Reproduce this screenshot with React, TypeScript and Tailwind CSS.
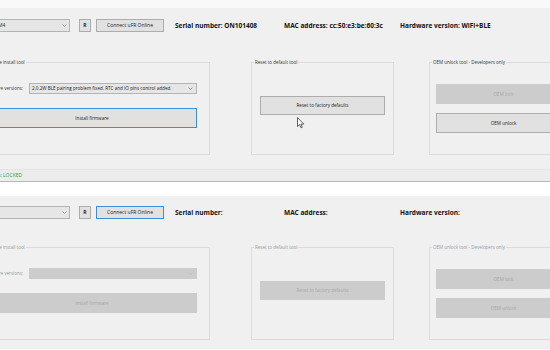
import React from "react";

interface PanelProps {
  online: boolean;
}

const Chevron = ({ color }: { color: string }) => (
  <svg width="5" height="3" viewBox="0 0 5 3" className="shrink-0">
    <path d="M0.5 0.5 L2.5 2.5 L4.5 0.5" fill="none" stroke={color} strokeWidth="0.7" />
  </svg>
);

const Cursor = () => (
  <svg width="8" height="12" viewBox="0 0 8 12" className="absolute left-[297px] top-[109px]">
    <path d="M0.5 0.5 L0.5 9.5 L2.6 7.6 L4 10.8 L5.3 10.2 L3.9 7.1 L6.8 7.1 Z" fill="#ffffff" stroke="#222" strokeWidth="0.7" />
  </svg>
);

const Panel = ({ online }: PanelProps) => {
  const label = online ? "text-[#333]" : "text-[#9a9a9a]";
  const btn = online
    ? "bg-[#e1e1e1] border border-[#adadad] text-[#222]"
    : "bg-[#cccccc] border border-[#cccccc] text-[#a8a8a8]";
  return (
    <div className={`relative bg-[#f0f0f0] ${online ? "pt-[11px]" : "pt-[10px]"}`}>
      {/* header row */}
      <div className="flex items-center h-[13px]">
        <div className="-ml-[20px] w-[90px] h-[13px] bg-[#e6e6e6] border border-[#b4b4b4] flex items-center justify-between pl-[10px] pr-[2px]">
          <span className="text-[5px] text-[#333]">{online ? "COM4" : ""}</span>
          <Chevron color="#888" />
        </div>
        <div className="ml-[9px] w-[12px] h-[13px] bg-[#e1e1e1] border border-[#adadad] flex items-center justify-center text-[5px] font-bold text-[#222]">
          R
        </div>
        <div
          className={`ml-[5px] w-[68px] h-[13px] bg-[#e1e1e1] border flex items-center justify-center text-[5px] text-[#222] ${
            online ? "border-[#adadad]" : "border-[#3d8ed8]"
          }`}
        >
          Connect uFR Online
        </div>
        <div className="ml-[11px] w-[109px] text-[6.5px] font-bold text-[#111] whitespace-nowrap">
          Serial number:{online ? " ON101408" : ""}
        </div>
        <div className="w-[116px] text-[6.5px] font-bold text-[#111] whitespace-nowrap">
          MAC address:{online ? " cc:50:e3:be:60:3c" : ""}
        </div>
        <div className="text-[6.5px] font-bold text-[#111] whitespace-nowrap">
          Hardware version:{online ? " WiFi+BLE" : ""}
        </div>
      </div>

      {/* group boxes */}
      <div className={`flex items-start ${online ? "mt-[27px] pb-[14px]" : "mt-[25px] pb-[9px]"}`}>
        <fieldset className="-ml-[22px] w-[232px] h-[96px] border border-[#dcdcdc] shrink-0">
          <legend className={`ml-[2px] px-[1px] text-[4.5px] leading-[6px] ${label}`}>Firmware install tool</legend>
          <div className="flex items-center pt-[18px]">
            <div className={`w-[44px] text-right text-[4.5px] whitespace-nowrap ${label}`}>Firmware versions:</div>
            <div
              className={`ml-[6px] w-[168px] h-[11px] flex items-center justify-between pl-[2px] pr-[3px] border ${
                online ? "bg-[#e6e6e6] border-[#b4b4b4]" : "bg-[#cccccc] border-[#cccccc]"
              }`}
            >
              <span className="text-[4.6px] text-[#222] whitespace-nowrap">
                {online ? "2.0.2W BLE pairing problem fixed. RTC and IO pins control added." : ""}
              </span>
              <Chevron color={online ? "#777" : "#bbb"} />
            </div>
          </div>
          <div
            className={`ml-[8px] mt-[14px] w-[210px] h-[20px] flex items-center justify-center text-[4.6px] ${
              online ? "bg-[#e1e1e1] border border-[#3d8ed8] text-[#222]" : btn
            }`}
          >
            Install firmware
          </div>
        </fieldset>

        <fieldset className="ml-[41px] w-[143px] h-[96px] border border-[#dcdcdc] shrink-0">
          <legend className={`ml-[2px] px-[1px] text-[4.5px] leading-[6px] ${label}`}>Reset to default tool</legend>
          <div className={`ml-[8px] mt-[31px] w-[125px] h-[19px] flex items-center justify-center text-[4.6px] ${btn}`}>
            Reset to factory defaults
          </div>
        </fieldset>

        <fieldset className="ml-[35px] w-[150px] h-[96px] border border-[#dcdcdc] shrink-0">
          <legend className={`ml-[2px] px-[1px] text-[4.5px] leading-[6px] ${label}`}>OEM unlock tool - Developers only</legend>
          <div className="flex flex-col gap-[9px] ml-[6px] mt-[19px]">
            <div className="w-[135px] h-[20px] flex items-center justify-center text-[4.6px] bg-[#cccccc] border border-[#cccccc] text-[#a8a8a8]">
              OEM lock
            </div>
            <div className={`w-[135px] h-[20px] flex items-center justify-center text-[4.6px] ${btn}`}>OEM unlock</div>
          </div>
        </fieldset>
      </div>
      {online && <Cursor />}
    </div>
  );
}

export default function App() {
  return (
    <div className="w-[550px] h-[350px] overflow-hidden bg-white font-['Open_Sans',sans-serif]">
      <div className="h-[8px] bg-[#f9f9f9]" />
      <Panel online />
      <div className="h-[13px] bg-[#ececec] border-t border-[#e4e4e4] border-b border-b-[#b8b8b8] flex items-center text-[5px]">
        <div className="-ml-[60px] w-[62px] text-right text-[#3a9a3a] whitespace-nowrap">Card status:</div>
        <div className="ml-[1px] text-[#3a9a3a]">LOCKED</div>
      </div>
      <div className="h-[14px] bg-white" />
      <Panel online={false} />
    </div>
  );
}
